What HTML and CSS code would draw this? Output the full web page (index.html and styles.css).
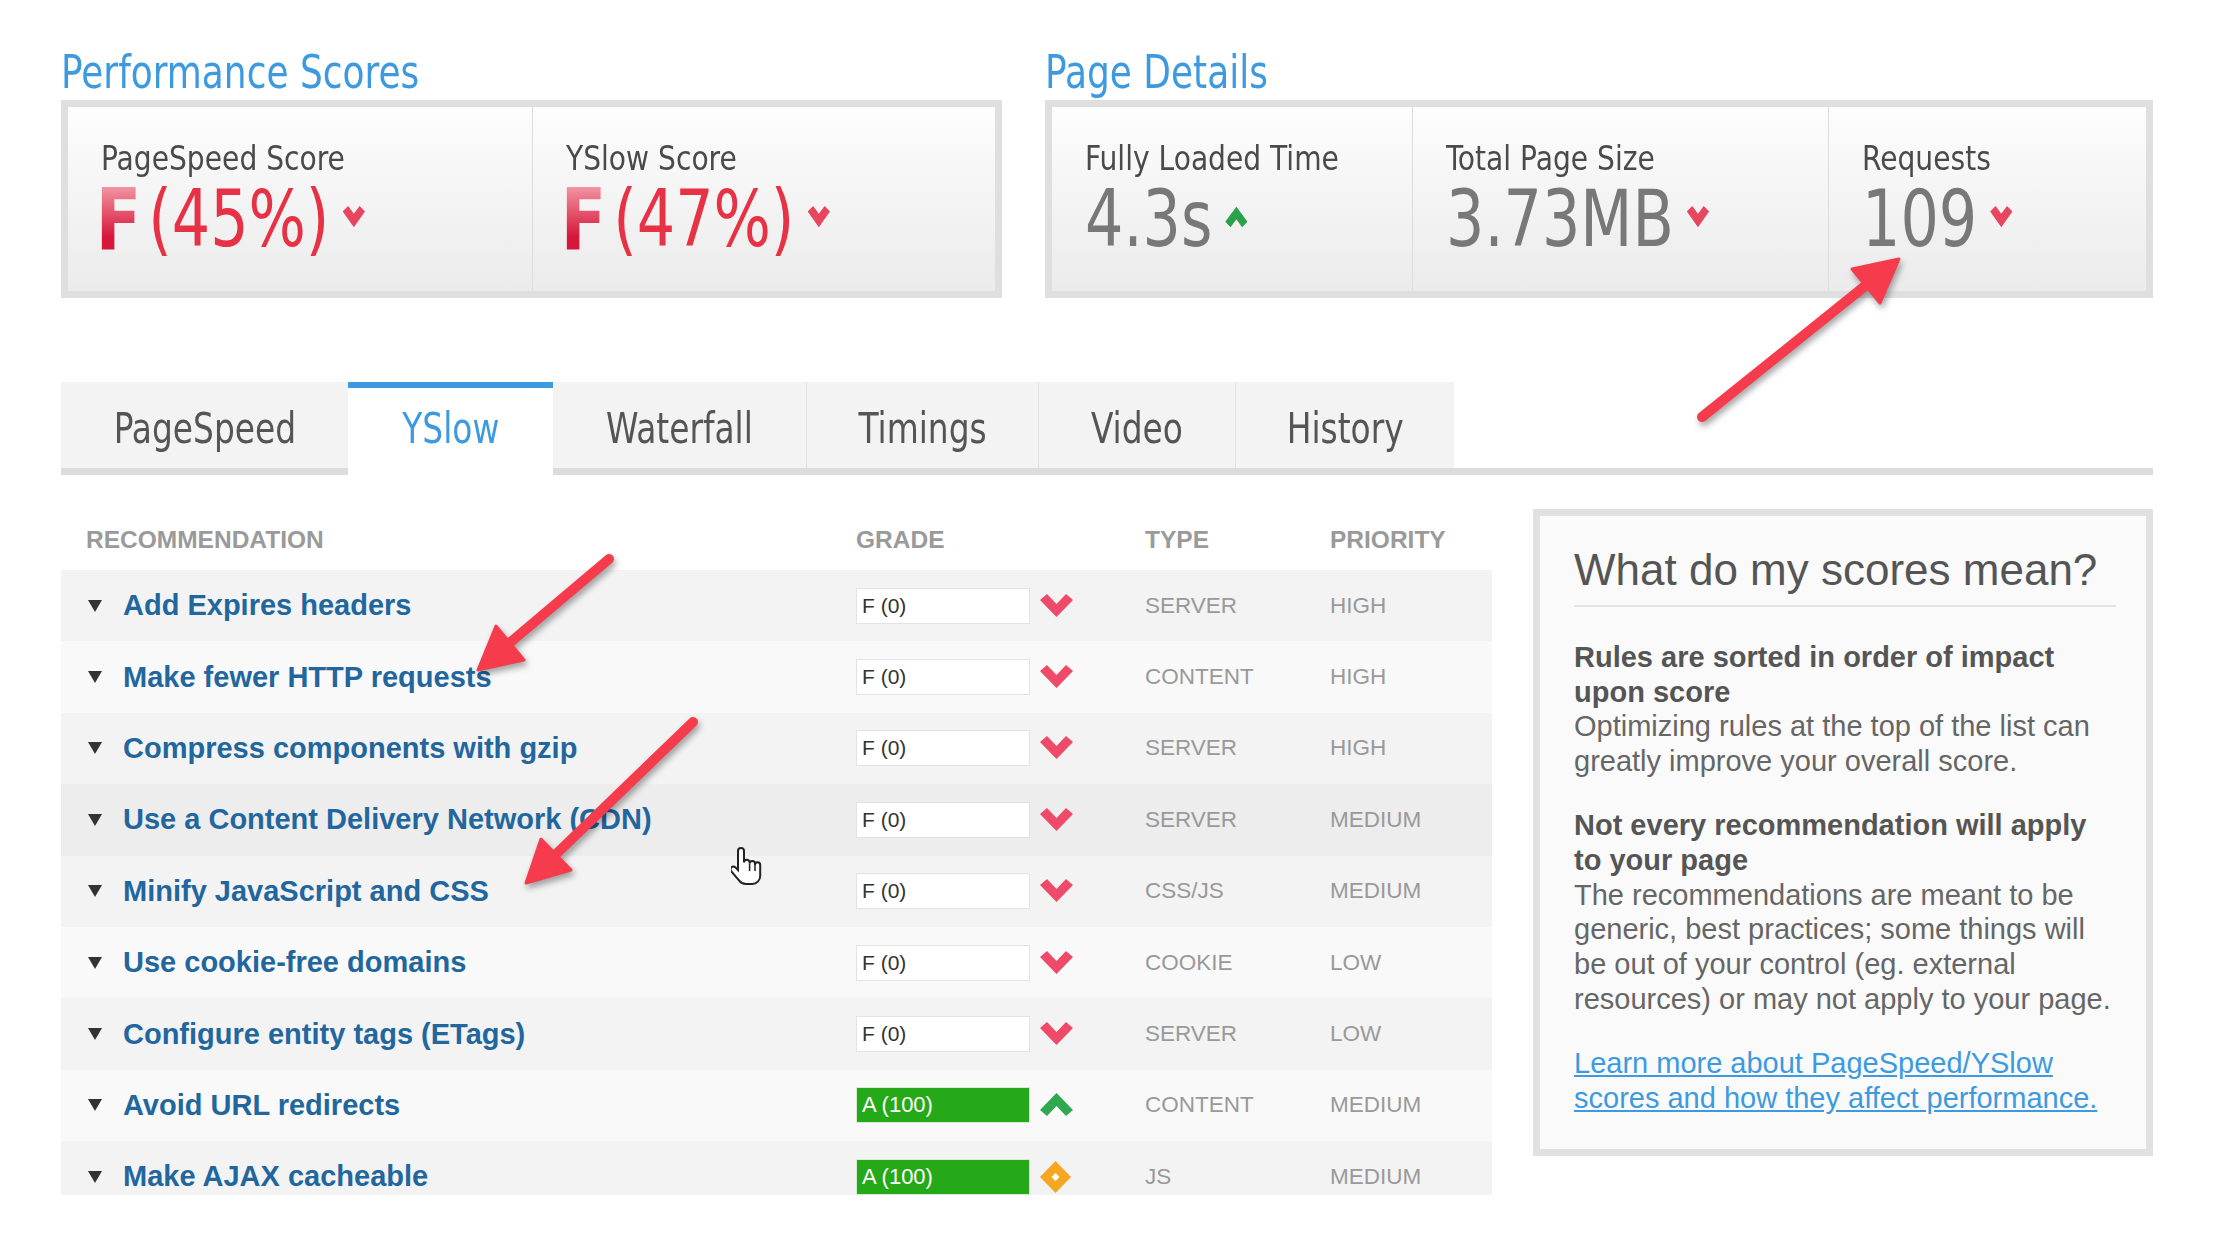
FILE: index.html
```html
<!DOCTYPE html>
<html lang="en">
<head>
<meta charset="utf-8">
<title>GTmetrix report</title>
<link rel="stylesheet" href="styles.css">
</head>
<body>
<div class="page">
  <div class="top">
    <section class="group group-perf">
      <h2 class="group-title narrow">Performance Scores</h2>
      <div class="box box-perf">
        <div class="cell">
          <div class="label narrow">PageSpeed Score</div>
          <div class="value narrow"><span class="grade-f">F</span><span class="pct">(45%)</span>
            <svg class="ind" width="26" height="22" viewBox="0 0 33 28"><polygon points="0,7 8,0 16.5,10 25,0 33,7 16.5,27" fill="#e8455f"/></svg></div>
        </div>
        <div class="cell">
          <div class="label narrow">YSlow Score</div>
          <div class="value narrow"><span class="grade-f">F</span><span class="pct">(47%)</span>
            <svg class="ind" width="26" height="22" viewBox="0 0 33 28"><polygon points="0,7 8,0 16.5,10 25,0 33,7 16.5,27" fill="#e8455f"/></svg></div>
        </div>
      </div>
    </section>
    <section class="group group-details">
      <h2 class="group-title narrow">Page Details</h2>
      <div class="box box-details">
        <div class="cell">
          <div class="label narrow">Fully Loaded Time</div>
          <div class="value narrow"><span class="num">4.3s</span>
            <svg class="ind" width="26" height="22" viewBox="0 0 33 28"><polygon points="0,20 8,27 16.5,17 25,27 33,20 16.5,1" fill="#2aa14b"/></svg></div>
        </div>
        <div class="cell">
          <div class="label narrow">Total Page Size</div>
          <div class="value narrow"><span class="num">3.73MB</span>
            <svg class="ind" width="26" height="22" viewBox="0 0 33 28"><polygon points="0,7 8,0 16.5,10 25,0 33,7 16.5,27" fill="#e8455f"/></svg></div>
        </div>
        <div class="cell">
          <div class="label narrow">Requests</div>
          <div class="value narrow"><span class="num">109</span>
            <svg class="ind" width="26" height="22" viewBox="0 0 33 28"><polygon points="0,7 8,0 16.5,10 25,0 33,7 16.5,27" fill="#e8455f"/></svg></div>
        </div>
      </div>
    </section>
  </div>

  <nav class="tabs narrow">
    <div class="tab"><span>PageSpeed</span></div>
    <div class="tab active"><span>YSlow</span></div>
    <div class="tab"><span>Waterfall</span></div>
    <div class="tab"><span>Timings</span></div>
    <div class="tab"><span>Video</span></div>
    <div class="tab"><span>History</span></div>
  </nav>

  <div class="content">
    <div class="table">
      <div class="thead">
        <div class="h-rec">RECOMMENDATION</div>
        <div>GRADE</div>
        <div></div>
        <div>TYPE</div>
        <div>PRIORITY</div>
      </div>
      <div class="row odd">
        <div class="rec"><span class="tri"></span><a href="#">Add Expires headers</a></div>
        <div><div class="gbox">F (0)</div></div>
        <div class="icon"><svg width="33" height="24" viewBox="0 0 33 24"><polygon points="0,6 7,0 16.5,10 26,0 33,6 16.5,23" fill="#ef4a67"/></svg></div>
        <div class="type">SERVER</div>
        <div class="type">HIGH</div>
      </div>
      <div class="row even">
        <div class="rec"><span class="tri"></span><a href="#">Make fewer HTTP requests</a></div>
        <div><div class="gbox">F (0)</div></div>
        <div class="icon"><svg width="33" height="24" viewBox="0 0 33 24"><polygon points="0,6 7,0 16.5,10 26,0 33,6 16.5,23" fill="#ef4a67"/></svg></div>
        <div class="type">CONTENT</div>
        <div class="type">HIGH</div>
      </div>
      <div class="row odd">
        <div class="rec"><span class="tri"></span><a href="#">Compress components with gzip</a></div>
        <div><div class="gbox">F (0)</div></div>
        <div class="icon"><svg width="33" height="24" viewBox="0 0 33 24"><polygon points="0,6 7,0 16.5,10 26,0 33,6 16.5,23" fill="#ef4a67"/></svg></div>
        <div class="type">SERVER</div>
        <div class="type">HIGH</div>
      </div>
      <div class="row hover">
        <div class="rec"><span class="tri"></span><a href="#">Use a Content Delivery Network (CDN)</a></div>
        <div><div class="gbox">F (0)</div></div>
        <div class="icon"><svg width="33" height="24" viewBox="0 0 33 24"><polygon points="0,6 7,0 16.5,10 26,0 33,6 16.5,23" fill="#ef4a67"/></svg></div>
        <div class="type">SERVER</div>
        <div class="type">MEDIUM</div>
      </div>
      <div class="row odd">
        <div class="rec"><span class="tri"></span><a href="#">Minify JavaScript and CSS</a></div>
        <div><div class="gbox">F (0)</div></div>
        <div class="icon"><svg width="33" height="24" viewBox="0 0 33 24"><polygon points="0,6 7,0 16.5,10 26,0 33,6 16.5,23" fill="#ef4a67"/></svg></div>
        <div class="type">CSS/JS</div>
        <div class="type">MEDIUM</div>
      </div>
      <div class="row even">
        <div class="rec"><span class="tri"></span><a href="#">Use cookie-free domains</a></div>
        <div><div class="gbox">F (0)</div></div>
        <div class="icon"><svg width="33" height="24" viewBox="0 0 33 24"><polygon points="0,6 7,0 16.5,10 26,0 33,6 16.5,23" fill="#ef4a67"/></svg></div>
        <div class="type">COOKIE</div>
        <div class="type">LOW</div>
      </div>
      <div class="row odd">
        <div class="rec"><span class="tri"></span><a href="#">Configure entity tags (ETags)</a></div>
        <div><div class="gbox">F (0)</div></div>
        <div class="icon"><svg width="33" height="24" viewBox="0 0 33 24"><polygon points="0,6 7,0 16.5,10 26,0 33,6 16.5,23" fill="#ef4a67"/></svg></div>
        <div class="type">SERVER</div>
        <div class="type">LOW</div>
      </div>
      <div class="row even">
        <div class="rec"><span class="tri"></span><a href="#">Avoid URL redirects</a></div>
        <div><div class="gbox a">A (100)</div></div>
        <div class="icon"><svg width="33" height="24" viewBox="0 0 33 24"><polygon points="0,17 7,23 16.5,13 26,23 33,17 16.5,0" fill="#2fa84f"/></svg></div>
        <div class="type">CONTENT</div>
        <div class="type">MEDIUM</div>
      </div>
      <div class="row odd">
        <div class="rec"><span class="tri"></span><a href="#">Make AJAX cacheable</a></div>
        <div><div class="gbox a">A (100)</div></div>
        <div class="icon"><svg width="31" height="32" viewBox="0 0 31 32"><polygon points="15.5,0 31,16 15.5,32 0,16" fill="#f5a623"/><polygon points="15.5,12 19.5,16 15.5,20 11.5,16" fill="#fff"/></svg></div>
        <div class="type">JS</div>
        <div class="type">MEDIUM</div>
      </div>
    </div>

    <aside class="panel">
      <h3>What do my scores mean?</h3>
      <p><strong>Rules are sorted in order of impact upon score</strong>Optimizing rules at the top of the list can greatly improve your overall score.</p>
      <p><strong>Not every recommendation will apply to your page</strong>The recommendations are meant to be generic, best practices; some things will be out of your control (eg. external resources) or may not apply to your page.</p>
      <p><a href="#">Learn more about PageSpeed/YSlow scores and how they affect performance.</a></p>
    </aside>
  </div>

  <svg class="annot" width="2236" height="1234" viewBox="0 0 2236 1234">
    <g fill="#f53b4c" stroke="#f53b4c" stroke-linecap="round" stroke-linejoin="round">
      <line x1="1702" y1="417" x2="1870" y2="282" stroke-width="10"/>
      <polygon points="1899,259 1880,303 1852,269" stroke-width="3"/>
      <line x1="609" y1="559" x2="506" y2="646" stroke-width="10"/>
      <polygon points="478,670 524,660 496,626" stroke-width="3"/>
      <line x1="693" y1="722" x2="552" y2="858" stroke-width="10"/>
      <polygon points="526,883 571,870 541,839" stroke-width="3"/>
    </g>
  </svg>

  <svg class="cursor" width="34" height="44" viewBox="0 0 34 44">
    <path d="M10 2c-1.7 0-3 1.3-3 3v19l-2.6-2.6c-1.1-1.1-2.9-1.1-4 0s-1.1 2.9 0 4l7.8 9.2c1.6 2.1 4 3.4 6.6 3.4h6.4c4.4 0 8-3.6 8-8V19c0-1.5-1.2-2.7-2.7-2.7S24 17.5 24 19v-1.3c0-1.5-1.2-2.7-2.7-2.7s-2.7 1.2-2.7 2.7V16.4c0-1.5-1.2-2.7-2.7-2.7S13 14.9 13 16.4V5c0-1.7-1.3-3-3-3z" fill="#fff" stroke="#222" stroke-width="2"/>
    <path d="M18.6 18v7M24 19v6" stroke="#222" stroke-width="1.5" fill="none"/>
  </svg>
</div>
</body>
</html>
```

FILE: styles.css
```css
* { box-sizing: border-box; }

body {
  margin: 0;
  background: #fff;
  font-family: "Liberation Sans", Arial, sans-serif;
}

.page {
  position: relative;
  width: 2236px;
  height: 1234px;
  overflow: hidden;
  padding-left: 61px;
}

.narrow {
  font-family: "DejaVu Sans Condensed", "DejaVu Sans", sans-serif;
}

/* ---------- top score groups ---------- */
.top {
  display: flex;
  gap: 43px;
}

.group-perf { width: 941px; }
.group-details { width: 1108px; }

.group-title {
  margin: 43px 0 0;
  height: 57px;
  font-size: 47px;
  line-height: 57px;
  font-weight: normal;
  color: #3d9ae0;
  transform: scaleX(0.85);
  transform-origin: 0 50%;
}

.box {
  display: grid;
  height: 198px;
  border: 7px solid #dfdfdf;
}

.box-perf { grid-template-columns: 1fr 1fr; }
.box-details { grid-template-columns: 360px 416px 1fr; }

.cell {
  background: linear-gradient(#fdfdfd, #ebebeb);
  border-left: 1px solid #dcdcdc;
  padding: 31px 0 0 33px;
}

.cell:first-child { border-left: 0; }

.label {
  font-size: 34px;
  line-height: 40px;
  color: #4a4a4a;
  transform: scaleX(0.92);
  transform-origin: 0 50%;
}

.value {
  display: flex;
  align-items: center;
  height: 82px;
  font-size: 78px;
  line-height: 82px;
  transform: scaleX(0.86);
  transform-origin: 0 50%;
}

.grade-f {
  font-weight: bold;
  font-size: 86px;
  margin-left: -6px;
  background: linear-gradient(#f6aab3, #d6163a 72%);
  -webkit-background-clip: text;
  background-clip: text;
  color: transparent;
}

.pct {
  color: #e63244;
  margin-left: 8px;
}

.num { color: #787878; }

.ind {
  margin-left: 15px;
  margin-top: -4px;
}

/* ---------- tabs ---------- */
.tabs {
  display: flex;
  align-items: flex-start;
  width: 2092px;
  margin-top: 84px;
  border-bottom: 7px solid #dcdcdc;
}

.tab {
  height: 86px;
  padding-top: 6px;
  display: flex;
  align-items: center;
  justify-content: center;
  background: #f3f3f3;
  border-left: 1px solid #e2e2e2;
  font-size: 42px;
  color: #555;
}

.tab span {
  display: inline-block;
  transform: scaleX(0.87);
}

.tab:nth-child(1) { width: 287px; border-left: 0; }
.tab:nth-child(2) { width: 205px; }
.tab:nth-child(3) { width: 253px; border-left: 0; }
.tab:nth-child(4) { width: 232px; }
.tab:nth-child(5) { width: 197px; }
.tab:nth-child(6) { width: 219px; }

.tab.active {
  height: 93px;
  margin-bottom: -7px;
  padding: 0 0 7px;
  background: #fff;
  border-top: 6px solid #3d9ae0;
  border-left: 0;
  color: #3d9ae0;
}

/* ---------- content ---------- */
.content {
  display: flex;
  align-items: flex-start;
  gap: 41px;
  margin-top: 34px;
}

.table {
  width: 1431px;
  height: 686px;
  overflow: hidden;
}

.thead,
.row {
  display: grid;
  grid-template-columns: 795px 184px 105px 185px 1fr;
  align-items: center;
}

.thead {
  height: 61px;
  font-weight: bold;
  font-size: 24.5px;
  color: #9a9a9a;
}

.h-rec { padding-left: 25px; }

.row { height: 71.4px; }
.row.odd { background: #f3f3f3; }
.row.even { background: #f9f9f9; }
.row.hover { background: #ededed; }

.rec {
  display: flex;
  align-items: center;
  padding-left: 27px;
}

.tri {
  width: 0;
  height: 0;
  border-left: 7px solid transparent;
  border-right: 7px solid transparent;
  border-top: 12px solid #333;
  margin-right: 21px;
}

.rec a {
  font-weight: bold;
  font-size: 29px;
  color: #22669e;
  text-decoration: none;
}

.gbox {
  width: 174px;
  height: 36px;
  background: #fff;
  border: 1px solid #e3e3e3;
  font-size: 21px;
  line-height: 34px;
  padding-left: 5px;
  color: #333;
}

.gbox.a {
  background: #25a918;
  border-color: #d6ecd2;
  color: #fff;
  font-size: 22px;
}

.icon {
  display: flex;
  align-items: center;
}

.type {
  font-size: 22.5px;
  color: #999;
}

/* ---------- side panel ---------- */
.panel {
  width: 620px;
  border: 7px solid #e1e1e1;
  background: #fafafa;
  padding: 28px 30px 34px 34px;
}

.panel h3 {
  margin: 0;
  font-size: 44px;
  line-height: 52px;
  font-weight: normal;
  color: #555;
  padding-bottom: 9px;
  border-bottom: 2px solid #e4e4e4;
}

.panel p {
  margin: 29.5px 0 0;
  font-size: 29px;
  line-height: 34.7px;
  color: #666;
}

.panel h3 + p { margin-top: 33px; }

.panel strong {
  display: block;
  color: #555;
}

.panel a {
  color: #3d9ae0;
  text-decoration: underline;
}

/* ---------- annotations ---------- */
.annot {
  position: absolute;
  left: 0;
  top: 0;
  pointer-events: none;
  filter: drop-shadow(2px 4px 3px rgba(0, 0, 0, 0.35));
}

.cursor {
  position: absolute;
  left: 731px;
  top: 846px;
  pointer-events: none;
}
```
